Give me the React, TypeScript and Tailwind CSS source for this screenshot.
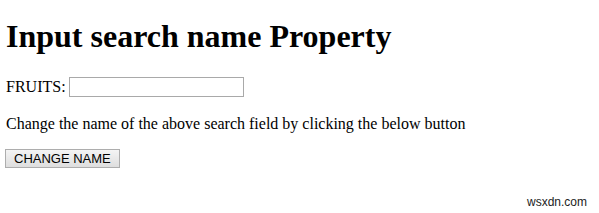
export default function App() {
  return (
    <div className="relative w-[599px] h-[213px] bg-white overflow-hidden font-['Liberation_Serif',serif] text-black">
      <div className="flex flex-col items-start pl-[6px]">
        <h1 className="mt-[18px] h-[37px] text-[32px] leading-[37px] font-bold">
          Input search name Property
        </h1>
        <div className="mt-[22px] flex items-center h-[20px]">
          <label className="text-[16px] leading-[18px]">FRUITS:</label>
          <input
            type="search"
            name="fruits"
            className="ml-[3px] w-[175px] h-[20px] border border-[#a9a9a9] bg-white outline-none"
          />
        </div>
        <p className="mt-[18px] text-[16px] leading-[18px]">
          Change the name of the above search field by clicking the below button
        </p>
        <button className="mt-[16px] -ml-[1px] h-[19px] px-[8px] border border-[#adadad] bg-gradient-to-b from-[#f4f4f4] to-[#dedede] text-[13px] leading-[17px] font-['Liberation_Sans',sans-serif] text-black">
          CHANGE NAME
        </button>
      </div>
      <div className="absolute left-[527px] top-[195px] text-[12px] leading-[14px] font-['Liberation_Sans',sans-serif] text-[#222]">
        wsxdn.com
      </div>
    </div>
  );
}
